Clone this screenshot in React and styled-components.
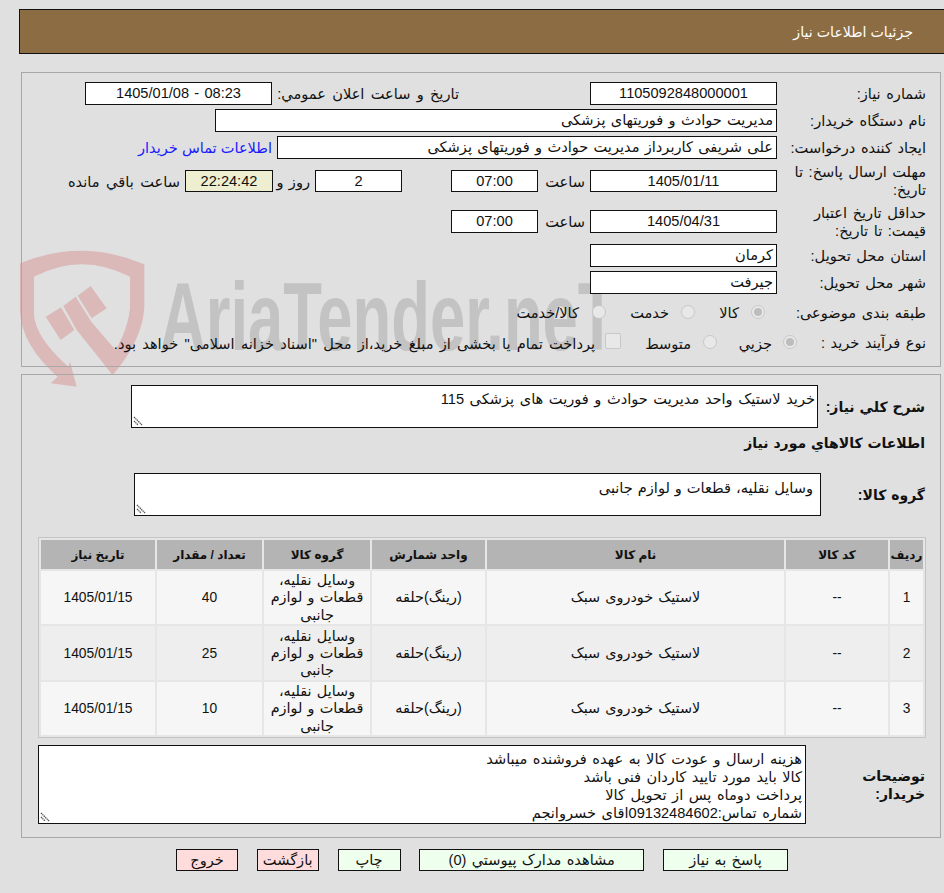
import React from "react";
import styled, { createGlobalStyle } from "styled-components";

const Global = createGlobalStyle`
  html, body { margin: 0; padding: 0; background: #e0e0e0; }
  body { font-family: Tahoma, "Liberation Sans", "DejaVu Sans", sans-serif; font-size: 14.6px; word-spacing: 1.2px; color: #111; }
  * { box-sizing: border-box; }
`;
const Page = styled.div`
  position: relative;
  isolation: isolate;
  width: 944px;
  height: 893px;
  overflow: hidden;
  direction: rtl;
  padding: 9px 3px 0 21px;
`;
const Header = styled.div`
  height: 45px;
  margin: 0 -3px 0 0;
  margin-left: -2px;
  background: #8c6c42;
  border: 1px solid #111;
  border-right: none;
  color: #fff;
  font-size: 14.2px;
  word-spacing: 0;
  line-height: 44px;
  padding-right: 31px;
`;
const Panel = styled.section`
  border: 1px solid #a8a8a8;
  margin-top: ${(p) => p.$top}px;
  padding: ${(p) => p.$padding};
`;
const Row = styled.div`
  display: flex;
  align-items: center;
  height: ${(p) => p.$h}px;
  margin-bottom: ${(p) => p.$mb || 0}px;
`;
const Label = styled.div`
  width: ${(p) => p.$w || 149}px;
  flex: none;
  line-height: 18px;
  word-spacing: 1.5px;
  padding-left: ${(p) => p.$pl || 0}px;
`;
const Field = styled.div`
  width: ${(p) => p.$w}px;
  height: ${(p) => p.$h || 23}px;
  flex: none;
  background: ${(p) => p.$bg || "#fff"};
  border: 1px solid #111;
  text-align: ${(p) => (p.$start ? "right" : "center")};
  padding: 0 3px;
  line-height: 21px;
  white-space: nowrap;
  overflow: hidden;
`;
const Gap = styled.div`
  width: ${(p) => p.$w}px;
  flex: none;
`;
const Text = styled.span`
  flex: none;
  white-space: nowrap;
  width: ${(p) => (p.$w ? p.$w + "px" : "auto")};
  word-spacing: ${(p) => p.$ws || 1.2}px;
`;
const Link = styled.a`
  color: #1a1aff;
  white-space: nowrap;
  margin-right: 5px;
  word-spacing: 0;
`;
const Radio = styled.span`
  flex: none;
  width: 14px;
  height: 14px;
  border-radius: 50%;
  border: 1px solid #c8c8c8;
  background: #e8e8e8;
  position: relative;
  top: -1px;
  display: inline-flex;
  align-items: center;
  justify-content: center;
  &::after {
    content: "";
    width: 8px;
    height: 8px;
    border-radius: 50%;
    background: ${(p) => (p.$on ? "#bdbdbd" : "transparent")};
  }
`;
const Check = styled.span`
  flex: none;
  width: 16px;
  height: 16px;
  border-radius: 2px;
  border: 1px solid #c8c8c8;
  background: #e8e8e8;
  position: relative;
  top: -2px;
`;
const BoldLabel = styled.div`
  flex: none;
  font-weight: 700;
  font-size: 14px;
  word-spacing: 1px;
  line-height: 18px;
  width: ${(p) => p.$w}px;
  padding-left: ${(p) => p.$pl || 0}px;
`;
const Box = styled.div`
  position: relative;
  flex: none;
  width: ${(p) => p.$w}px;
  height: ${(p) => p.$h}px;
  background: #fff;
  border: 1px solid #111;
  padding: ${(p) => p.$pad};
  line-height: 18px;
  white-space: pre-line;
  word-spacing: ${(p) => p.$ws || 1.5}px;
`;
const Grip = styled.svg`
  position: absolute;
  left: 1px;
  bottom: 1px;
  width: 10px;
  height: 10px;
`;
const Table = styled.table`
  width: 888px;
  border-collapse: separate;
  border-spacing: 2px;
  border: 1px solid #c4c4c4;
  margin: 21px -1px 7px 0;
  table-layout: fixed;
  background: #e6e6e6;
`;
const Th = styled.th`
  height: 29px;
  background: #b4b4b4;
  font-size: 12px;
  font-weight: 700;
  word-spacing: 0;
  padding: 0;
  width: ${(p) => p.$w}px;
`;
const Td = styled.td`
  height: ${(p) => (p.$tall ? 54 : 53)}px;
  background: ${(p) => (p.$tall ? "#eeeeee" : "#f6f6f6")};
  text-align: center;
  padding: 1px 4px 0;
  line-height: 17.3px;
  font-size: ${(p) => (p.$num ? "13.8px" : "14.4px")};
`;
const Buttons = styled.div`
  display: flex;
  gap: 18.75px;
  margin-top: 11px;
  padding-right: 153px;
`;
const Btn = styled.div`
  width: ${(p) => p.$w}px;
  height: 22px;
  background: ${(p) => (p.$red ? "#ffdcdc" : "#eeffee")};
  border: 1px solid #111;
  text-align: center;
  line-height: 20px;
  white-space: nowrap;
`;
const Mark = styled.div`
  position: absolute;
  z-index: -1;
  left: 10px;
  top: 245px;
  width: 620px;
  height: 150px;
  direction: ltr;
  pointer-events: none;
`;
const Word = styled.span`
  position: absolute;
  left: 150px;
  top: 24px;
  font-family: "Liberation Sans", sans-serif;
  font-weight: 700;
  font-size: 96px;
  line-height: 96px;
  word-spacing: 0;
  color: #c3c3c3;
  transform: scaleX(0.66);
  transform-origin: left top;
  white-space: nowrap;
`;
const Shield = styled.svg`
  position: absolute;
  left: 0;
  top: 0;
  width: 160px;
  height: 150px;
`;

const Group = () => <>وسایل نقلیه، قطعات و لوازم جانبی</>;
const rows = [
  ["1", "40"],
  ["2", "25"],
  ["3", "10"],
];
const GripIcon = () => (
  <Grip viewBox="0 0 10 10">
    <path d="M1 1 L9 9 M1 5 L5 9" stroke="#555" strokeWidth="1.3" strokeDasharray="1.4 .6" fill="none" />
  </Grip>
);

export default function App() {
  return (
    <Page>
      <Global />
      <Mark>
        <Shield viewBox="0 0 480 450">
          <g fill="#dcb9b9">
            <path d="M30 55 Q215 -22 403 58 V190 Q395 290 308 390 L285 360 Q350 280 360 190 V95 Q215 20 72 95 V210 Q78 280 175 365 L180 350 L200 425 L122 415 L143 395 Q35 300 30 200 Z" />
            <path d="M160 183 L197 155 L245 232 L338 340 L308 390 L200 255 Z" />
            <path d="M107 215 L153 187 L193 255 L152 285 Z" />
            <path d="M203 152 L242 123 L290 190 L245 220 Z" />
          </g>
        </Shield>
        <Word>AriaTender.neT</Word>
      </Mark>
      <Header>جزئیات اطلاعات نیاز</Header>
      <Panel $top={18} $padding="7px 14px 9px 0">
        <Row $h={27}>
          <Label>شماره نیاز:</Label>
          <Field $w={187}>1105092848000001</Field>
          <Gap $w={131} />
          <Text $w={187} $ws={2.2}>تاریخ و ساعت اعلان عمومي:</Text>
          <Field $w={187}>08:23 - 1405/01/08</Field>
        </Row>
        <Row $h={27}>
          <Label>نام دستگاه خریدار:</Label>
          <Field $w={562} $start>مدیریت حوادث و فوریتهای پزشکی</Field>
        </Row>
        <Row $h={27}>
          <Label>ایجاد کننده درخواست:</Label>
          <Field $w={500} $start>علی شریفی کاربرداز مدیریت حوادث و فوریتهای پزشکی</Field>
          <Link>اطلاعات تماس خریدار</Link>
        </Row>
        <Row $h={40}>
          <Label>مهلت ارسال پاسخ: تا تاریخ:</Label>
          <Field $w={187} $h={22}>1405/01/11</Field>
          <Gap $w={5} />
          <Text $w={47}>ساعت</Text>
          <Field $w={87} $h={22}>07:00</Field>
          <Gap $w={49} />
          <Field $w={87} $h={22}>2</Field>
          <Gap $w={5} />
          <Text $w={37}>روز و</Text>
          <Field $w={88} $h={22} $bg="#eeeed0">22:24:42</Field>
          <Gap $w={5} />
          <Text $ws={2.5}>ساعت باقي مانده</Text>
        </Row>
        <Row $h={41}>
          <Label $pl={10}>حداقل تاریخ اعتبار قیمت: تا تاریخ:</Label>
          <Field $w={187}>1405/04/31</Field>
          <Gap $w={5} />
          <Text $w={47}>ساعت</Text>
          <Field $w={87}>07:00</Field>
        </Row>
        <Row $h={27}>
          <Label>استان محل تحویل:</Label>
          <Field $w={187} $start>کرمان</Field>
        </Row>
        <Row $h={27}>
          <Label>شهر محل تحویل:</Label>
          <Field $w={187} $start>جیرفت</Field>
        </Row>
        <Row $h={33}>
          <Label $w={161}>طبقه بندی موضوعی:</Label>
          <Radio $on />
          <Gap $w={12} />
          <Text $w={44}>کالا</Text>
          <Radio />
          <Gap $w={12} />
          <Text $w={63}>خدمت</Text>
          <Radio />
          <Gap $w={13} />
          <Text>کالا/خدمت</Text>
        </Row>
        <Row $h={28}>
          <Label $w={129}>نوع فرآیند خرید :</Label>
          <Radio $on />
          <Gap $w={11} />
          <Text $w={55}>جزیي</Text>
          <Radio />
          <Gap $w={12} />
          <Text $w={70}>متوسط</Text>
          <Check />
          <Gap $w={10} />
          <Text $ws={2.2}>پرداخت تمام یا بخشی از مبلغ خرید،از محل "اسناد خزانه اسلامی" خواهد بود.</Text>
        </Row>
      </Panel>
      <Panel $top={7} $padding="10px 15px 13px 0">
        <Row $h={43}>
          <BoldLabel $w={107}>شرح کلي نیاز:</BoldLabel>
          <Box $w={687} $h={43} $pad="4px 2px 0 0">
            خرید لاستیک واحد مدیریت حوادث و فوریت های پزشکی 115
            <GripIcon />
          </Box>
        </Row>
        <Row $h={30} $mb={15}>
          <BoldLabel $w={300}>اطلاعات کالاهاي مورد نیاز</BoldLabel>
        </Row>
        <Row $h={43}>
          <BoldLabel $w={104}>گروه کالا:</BoldLabel>
          <Box $w={687} $h={43} $pad="5px 7px 0 0" $ws={0.9}>
            <Group />
            <GripIcon />
          </Box>
        </Row>
        <Table>
          <thead>
            <tr>
              <Th $w={33}>ردیف</Th>
              <Th $w={102}>کد کالا</Th>
              <Th $w={297}>نام کالا</Th>
              <Th $w={113}>واحد شمارش</Th>
              <Th $w={106}>گروه کالا</Th>
              <Th $w={105}>تعداد / مقدار</Th>
              <Th $w={114}>تاریخ نیاز</Th>
            </tr>
          </thead>
          <tbody>
            {rows.map(([n, q], i) => (
              <tr key={n}>
                <Td $tall={i === 1} $num>{n}</Td>
                <Td $tall={i === 1} $num>--</Td>
                <Td $tall={i === 1}>لاستیک خودروی سبک</Td>
                <Td $tall={i === 1}>(رینگ)حلقه</Td>
                <Td $tall={i === 1}><Group /></Td>
                <Td $tall={i === 1} $num>{q}</Td>
                <Td $tall={i === 1} $num>1405/01/15</Td>
              </tr>
            ))}
          </tbody>
        </Table>
        <Row $h={79}>
          <BoldLabel $w={119} $pl={40}>توضیحات خریدار:</BoldLabel>
          <Box $w={768} $h={79} $pad="4px 3px 0 0">
            {"هزینه ارسال و عودت کالا به عهده فروشنده میباشد\nکالا باید مورد تایید کاردان فنی باشد\nپرداخت دوماه پس از تحویل کالا\nشماره تماس:09132484602اقای خسروانجم"}
            <GripIcon />
          </Box>
        </Row>
      </Panel>
      <Buttons>
        <Btn $w={125}>پاسخ به نیاز</Btn>
        <Btn $w={225}>مشاهده مدارک پیوستي (0)</Btn>
        <Btn $w={63}>چاپ</Btn>
        <Btn $w={62} $red>بازگشت</Btn>
        <Btn $w={62} $red>خروج</Btn>
      </Buttons>
    </Page>
  );
}
